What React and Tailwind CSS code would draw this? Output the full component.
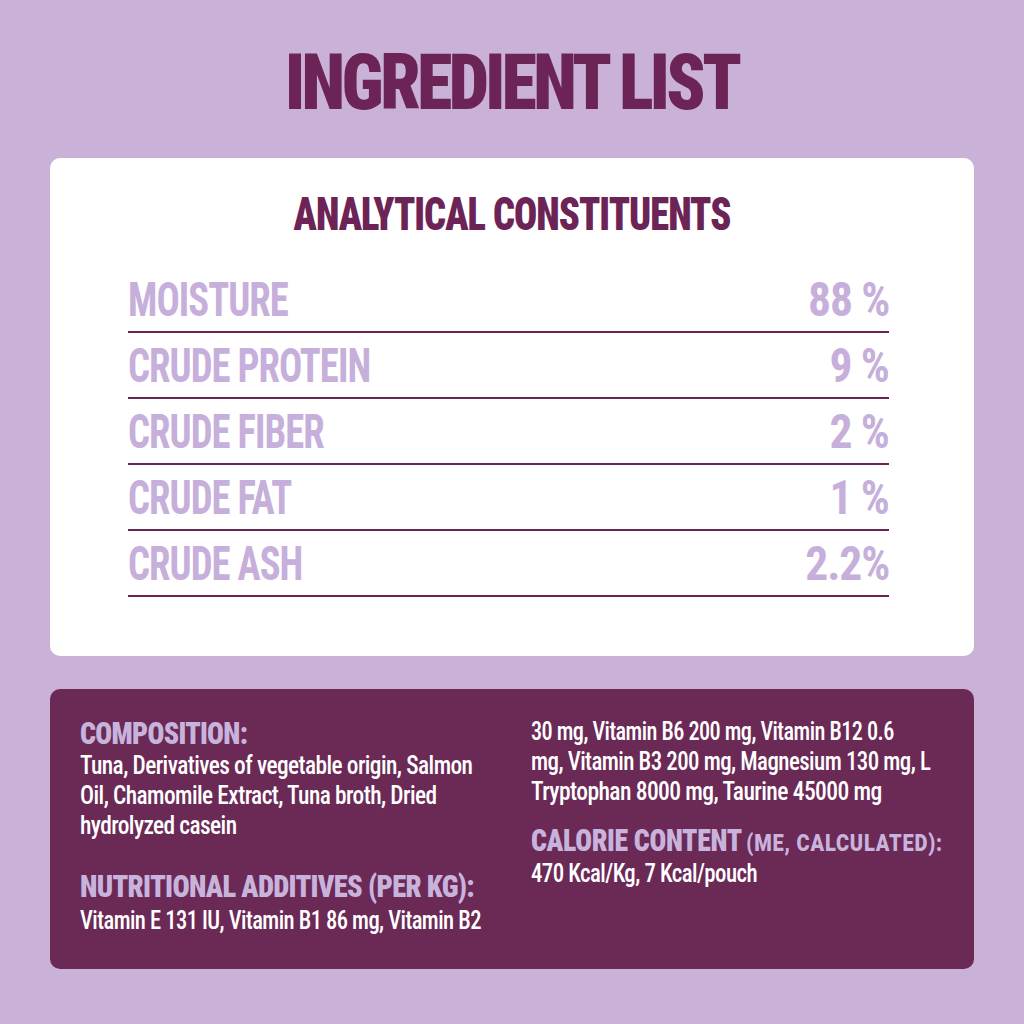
const rows = [
  ["MOISTURE", "88 %"],
  ["CRUDE PROTEIN", "9 %"],
  ["CRUDE FIBER", "2 %"],
  ["CRUDE FAT", "1 %"],
  ["CRUDE ASH", "2.2%"],
];

function Line({ children, s = "scale-x-[0.935]" }) {
  return <span className={"block w-max whitespace-nowrap origin-left " + s}>{children}</span>;
}

export default function App() {
  return (
    <div className="w-[1024px] h-[1024px] bg-[#c9b1d8] flex flex-col items-center font-['Roboto_Condensed',sans-serif]">
      <h1 className="mt-[45px] text-[77px] leading-none font-black tracking-tighter text-[#6c2456] scale-x-[0.93] whitespace-nowrap">
        INGREDIENT LIST
      </h1>
      <section className="mt-[36px] w-[924px] bg-white rounded-[10px] pt-[33px] pb-[59px] flex flex-col">
        <h2 className="self-center text-[46px] leading-none font-black tracking-tight text-[#6c2456] scale-x-[0.837] whitespace-nowrap">
          ANALYTICAL CONSTITUENTS
        </h2>
        <div className="mt-[30px] ml-[78px] w-[761px] flex flex-col">
          {rows.map(([k, v]) => (
            <div
              key={k}
              className="flex justify-between items-end pt-[8px] pb-[7px] border-b-2 border-[#6a2352] text-[49px] leading-none font-bold tracking-tight text-[#c6afda]"
            >
              <span className="origin-left scale-x-[0.79] whitespace-nowrap">{k}</span>
              <span className="origin-right scale-x-[0.93] whitespace-nowrap">{v}</span>
            </div>
          ))}
        </div>
      </section>
      <section className="mt-[33px] w-[924px] bg-[#6b2956] rounded-[10px] pt-[28px] pb-[33px] px-[30px] grid grid-cols-[421px_1fr] gap-x-[30px] text-white">
        <div className="flex flex-col">
          <h3 className="w-max whitespace-nowrap origin-left scale-x-[0.875] text-[32px] leading-none font-black tracking-tight text-[#c8b3dd]">
            COMPOSITION:
          </h3>
          <p className="mt-[2px] text-[25px] leading-[30px] font-medium tracking-tight">
            <Line>Tuna, Derivatives of vegetable origin, Salmon</Line>
            <Line>Oil, Chamomile Extract, Tuna broth, Dried</Line>
            <Line>hydrolyzed casein</Line>
          </p>
          <h3 className="mt-[29px] w-max whitespace-nowrap origin-left scale-x-[0.893] text-[32px] leading-none font-black tracking-tight text-[#c8b3dd]">
            NUTRITIONAL ADDITIVES (PER KG):
          </h3>
          <p className="mt-[4px] text-[25px] leading-[30px] font-medium tracking-tight">
            <Line s="scale-x-[0.904]">Vitamin E 131 IU, Vitamin B1 86 mg, Vitamin B2</Line>
          </p>
        </div>
        <div className="flex flex-col">
          <p className="text-[25px] leading-[30px] font-medium tracking-tight">
            <Line s="scale-x-[0.892]">30 mg, Vitamin B6 200 mg, Vitamin B12 0.6</Line>
            <Line s="scale-x-[0.917]">mg, Vitamin B3 200 mg, Magnesium 130 mg, L</Line>
            <Line s="scale-x-[0.943]">Tryptophan 8000 mg, Taurine 45000 mg</Line>
          </p>
          <h3 className="mt-[17px] w-max whitespace-nowrap origin-left scale-x-[0.87] leading-none font-black tracking-tight text-[#c8b3dd]">
            <span className="text-[32px]">CALORIE CONTENT</span>{" "}
            <span className="ml-[2px] text-[23px] font-['Roboto',sans-serif] tracking-[0.04em]">(ME, CALCULATED):</span>
          </h3>
          <p className="mt-[3px] text-[25px] leading-[30px] font-medium tracking-tight">
            <Line s="scale-x-[0.915]">470 Kcal/Kg, 7 Kcal/pouch</Line>
          </p>
        </div>
      </section>
    </div>
  );
}
